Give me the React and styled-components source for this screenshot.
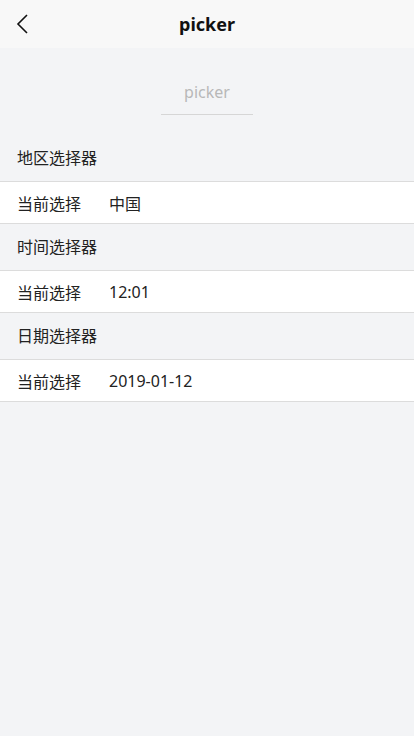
import React from "react";
import styled, { createGlobalStyle } from "styled-components";

const Global = createGlobalStyle`
  html, body { margin: 0; padding: 0; }
  body {
    background: #f3f4f6;
    font-family: "Noto Sans", "Noto Sans CJK SC", sans-serif;
    color: #222;
  }
`;

const Page = styled.div`
  min-height: 736px;
  background: #f3f4f6;
  display: flex;
  flex-direction: column;
`;

const NavBar = styled.header`
  height: 48px;
  background: #f8f8f8;
  display: flex;
  align-items: center;
  justify-content: center;
  position: relative;
`;

const BackButton = styled.button`
  position: absolute;
  left: 10px;
  top: 10px;
  width: 24px;
  height: 28px;
  border: 0;
  background: none;
  padding: 0;
  display: flex;
  align-items: center;
  justify-content: center;
`;

const NavTitle = styled.h1`
  margin: 0;
  font-size: 18px;
  font-weight: 700;
  color: #111;
  line-height: 48px;
`;

const InputWrap = styled.div`
  display: flex;
  justify-content: center;
  padding-top: 22px;
`;

const Field = styled.input`
  width: 92px;
  height: 44px;
  border: 0;
  border-bottom: 1px solid #d6d6d6;
  background: transparent;
  text-align: center;
  font-family: "Noto Sans", "Noto Sans CJK SC", sans-serif;
  font-size: 16px;
  color: #333;
  outline: none;
  padding: 0;
  &::placeholder { color: #b8b8b8; }
`;

const SectionTitle = styled.div`
  height: 46px;
  line-height: 46px;
  padding-left: 17px;
  font-size: 16px;
  color: #222;
  margin-top: ${p => (p.$first ? "20px" : "0")};
`;

const Row = styled.div`
  height: 41px;
  background: #fff;
  border-top: 1px solid #dcdcdc;
  border-bottom: 1px solid #dcdcdc;
  display: flex;
  align-items: center;
  padding-left: 17px;
  font-size: 16px;
  color: #222;
`;

const Label = styled.span`
  width: 92px;
  flex-shrink: 0;
`;

const Value = styled.span``;

const sections = [
  { title: "地区选择器", value: "中国" },
  { title: "时间选择器", value: "12:01" },
  { title: "日期选择器", value: "2019-01-12" },
];

export default function App() {
  return (
    <>
      <Global />
      <Page>
        <NavBar>
          <BackButton aria-label="back">
            <svg width="14" height="22" viewBox="0 0 14 22">
              <path d="M12 2 L3 11 L12 20" fill="none" stroke="#111" strokeWidth="1.6" />
            </svg>
          </BackButton>
          <NavTitle>picker</NavTitle>
        </NavBar>
        <InputWrap>
          <Field placeholder="picker" />
        </InputWrap>
        {sections.map((s, i) => (
          <React.Fragment key={s.title}>
            <SectionTitle $first={i === 0}>{s.title}</SectionTitle>
            <Row>
              <Label>当前选择</Label>
              <Value>{s.value}</Value>
            </Row>
          </React.Fragment>
        ))}
      </Page>
    </>
  );
}
